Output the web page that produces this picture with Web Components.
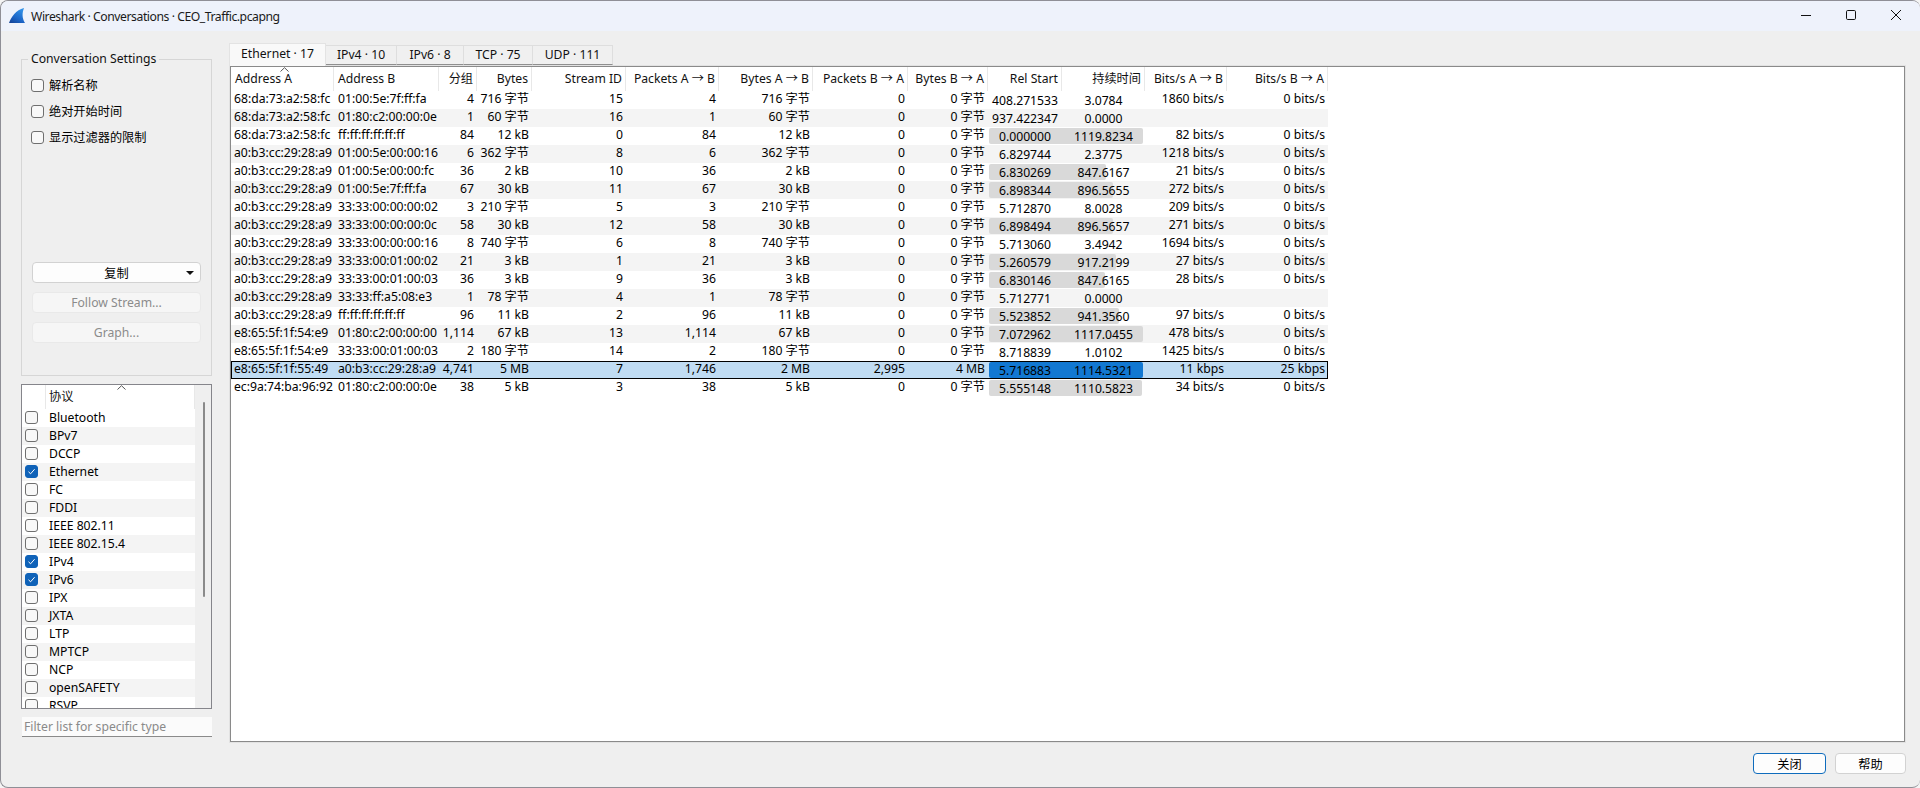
<!DOCTYPE html>
<html lang="zh">
<head>
<meta charset="utf-8">
<title>Wireshark · Conversations · CEO_Traffic.pcapng</title>
<style>
  html, body { margin: 0; height: 788px; overflow: hidden; background: #f4f4f4; }
  body { font: 12.2px "Noto Sans", "Noto Sans CJK SC", sans-serif; color: #000; }
</style>
</head>
<body>
<ws-window>
  <ws-titlebar slot="title">Wireshark · Conversations · CEO_Traffic.pcapng</ws-titlebar>
  <ws-sidebar slot="side"></ws-sidebar>
  <ws-tabs slot="main"></ws-tabs>
  <ws-btn slot="actions" kind="primary" style="width:73px">关闭</ws-btn>
  <ws-btn slot="actions" style="width:71px">帮助</ws-btn>
</ws-window>

<script>
class WsWindow extends HTMLElement {
  constructor() {
    super();
    this.attachShadow({ mode: "open" });
    this.shadowRoot.innerHTML = `
      <style>
        :host {
          display: flex;
          flex-direction: column;
          box-sizing: border-box;
          height: 788px;
          background: #efefef;
          border: 1px solid #8f8f96;
          border-right: 0;
          border-radius: 8px;
          overflow: hidden;
        }
        .body { flex: 1; display: flex; min-height: 0; padding-right: 14px; }
        .side { width: 191px; margin: 0 17px 0 20px; flex: none; }
        .main { flex: 1; min-width: 0; padding-top: 12px; display: flex; }
        .actions { display: flex; justify-content: flex-end; gap: 9px; padding: 10px 14px 13px 0; }
      </style>
      <slot name="title"></slot>
      <div class="body">
        <div class="side"><slot name="side"></slot></div>
        <div class="main"><slot name="main"></slot></div>
      </div>
      <div class="actions"><slot name="actions"></slot></div>
    `;
  }
}

class WsTitlebar extends HTMLElement {
  constructor() {
    super();
    this.attachShadow({ mode: "open" });
    this.shadowRoot.innerHTML = `
      <style>
        :host {
          display: flex;
          align-items: center;
          height: 30px;
          flex: none;
          background: #eef2fb;
          padding-left: 8px;
        }
        .fin { width: 16px; height: 16px; margin-right: 6px; flex: none; }
        .text { flex: 1; color: #1a1a1a; letter-spacing: -0.45px; }
        .ctl { display: flex; margin: 0 19px 2px 0; gap: 35px; }
        svg.c { width: 10px; height: 10px; fill: none; stroke: #111; stroke-width: 1; display: block; }
      </style>
      <svg class="fin" viewBox="0 0 16 16">
        <defs>
          <linearGradient id="g" x1="0" y1="1" x2="0.6" y2="0">
            <stop offset="0" stop-color="#123f92"/>
            <stop offset="0.45" stop-color="#1c66c8"/>
            <stop offset="1" stop-color="#2f8fe6"/>
          </linearGradient>
        </defs>
        <path d="M0 15 C2 9 7 2 15 0 C13 5 13 10 16 15 Z" fill="url(#g)"/>
      </svg>
      <span class="text"><slot></slot></span>
      <div class="ctl">
        <svg class="c" viewBox="0 0 10 10"><path d="M0 5.5H10"/></svg>
        <svg class="c" viewBox="0 0 10 10"><rect x=".5" y=".5" width="9" height="9" rx="1.2"/></svg>
        <svg class="c" viewBox="0 0 10 10"><path d="M0 0L10 10M10 0L0 10"/></svg>
      </div>
    `;
  }
}

class WsCheck extends HTMLElement {
  constructor() {
    super();
    this.attachShadow({ mode: "open" });
  }
  connectedCallback() {
    const on = this.hasAttribute("checked");
    this.shadowRoot.innerHTML = `
      <style>
        :host { display: flex; align-items: center; gap: 5px; }
        .box {
          width: 13px; height: 13px; flex: none; box-sizing: border-box;
          border-radius: 3px; display: block;
          border: 1px solid ${on ? "#0f62b8" : "#6f6f6f"};
          background: ${on ? "#0f62b8" : "#f8f8f8"};
        }
        svg { display: block; width: 11px; height: 11px; fill: none; stroke: #fff; stroke-width: 1; }
      </style>
      <span class="box">${on ? '<svg viewBox="0 0 11 11"><path d="M2.5 5.8L4.6 7.8L8.6 3.2"/></svg>' : ""}</span>
      <span><slot></slot></span>
    `;
  }
}

class WsBtn extends HTMLElement {
  constructor() {
    super();
    this.attachShadow({ mode: "open" });
  }
  connectedCallback() {
    const kind = this.getAttribute("kind");
    const look = {
      primary: "background:#fdfdfd;border-color:#0f6cbd;color:#000;",
      disabled: "background:#f6f6f6;border-color:#e9e9e9;color:#8b8b8b;",
    }[kind] || "background:#fdfdfd;border-color:#d2d2d2;color:#000;";
    this.shadowRoot.innerHTML = `
      <style>
        :host { display: block; height: 21px; }
        .b {
          position: relative; box-sizing: border-box; height: 100%;
          display: flex; align-items: center; justify-content: center;
          border: 1px solid; border-radius: 4px; ${look}
        }
        .arrow {
          position: absolute; right: 6px; top: 8px; width: 0; height: 0;
          border: 4px solid transparent; border-top: 4px solid #111; border-bottom: 0;
        }
      </style>
      <div class="b"><slot></slot>${kind === "menu" ? '<i class="arrow"></i>' : ""}</div>
    `;
  }
}

class WsSidebar extends HTMLElement {
  constructor() {
    super();
    this.attachShadow({ mode: "open" });
    this.shadowRoot.innerHTML = `
      <style>
        :host { display: flex; flex-direction: column; padding-top: 28px; }
        .group {
          box-sizing: border-box; height: 317px;
          border: 1px solid #d6d6d6; padding: 0 10px 32px 9px;
          display: flex; flex-direction: column;
        }
        .legend {
          align-self: flex-start; margin: -9px 0 9px -3px; padding: 0 3px;
          line-height: 16px; background: #efefef; color: #111;
        }
        .checks { display: flex; flex-direction: column; gap: 8px; }
        ws-check { height: 18px; }
        .btns { display: flex; flex-direction: column; gap: 9px; margin: auto 0 0 1px; }
        .filter {
          margin: 8px 0 0 1px; height: 20px; box-sizing: border-box; line-height: 19px;
          background: #fbfbfb; border-bottom: 1px solid #8a8a8a; padding-left: 2px; color: #8a8a8a;
        }
        ws-protocols { margin-top: 8px; }
      </style>
      <div class="group">
        <div class="legend">Conversation Settings</div>
        <div class="checks">
          <ws-check>解析名称</ws-check>
          <ws-check>绝对开始时间</ws-check>
          <ws-check>显示过滤器的限制</ws-check>
        </div>
        <div class="btns">
          <ws-btn kind="menu">复制</ws-btn>
          <ws-btn kind="disabled">Follow Stream...</ws-btn>
          <ws-btn kind="disabled">Graph...</ws-btn>
        </div>
      </div>
      <ws-protocols></ws-protocols>
      <div class="filter">Filter list for specific type</div>
    `;
  }
}

class WsProtocols extends HTMLElement {
  constructor() {
    super();
    this.attachShadow({ mode: "open" });
    const items = ["Bluetooth", "BPv7", "DCCP", "Ethernet", "FC", "FDDI", "IEEE 802.11", "IEEE 802.15.4",
      "IPv4", "IPv6", "IPX", "JXTA", "LTP", "MPTCP", "NCP", "openSAFETY", "RSVP"];
    const checked = ["Ethernet", "IPv4", "IPv6"];
    const rows = items.map((p) =>
      `<ws-check class="row" ${checked.includes(p) ? "checked" : ""}>${p}</ws-check>`).join("");
    this.shadowRoot.innerHTML = `
      <style>
        :host {
          display: block; position: relative; box-sizing: border-box; height: 325px;
          border: 1px solid #85858b; background: #efefef; overflow: hidden;
        }
        .list { width: 173px; }
        .head { display: flex; height: 24px; background: #fff; }
        .head b { width: 23px; border-right: 1px solid #e8e8e8; font-weight: 400; }
        .head span { flex: 1; border-right: 1px solid #e8e8e8; padding-left: 3px; line-height: 24px; color: #111; }
        .row { height: 18px; box-sizing: border-box; padding: 0 0 1px 3px; gap: 11px; background: #fff; }
        .row:nth-child(even) { background: #f4f4f4; }
        .caret { position: absolute; left: 95px; top: 0; width: 9px; height: 5px; fill: none; stroke: #555; }
        .thumb { position: absolute; left: 181px; top: 17px; width: 2px; height: 195px; background: #8a8a8a; border-radius: 1px; }
      </style>
      <div class="list">
        <div class="head"><b></b><span>协议</span></div>
        <div class="rows">${rows}</div>
      </div>
      <svg class="caret" viewBox="0 0 9 5"><path d="M.5 4.5L4.5 .7L8.5 4.5"/></svg>
      <div class="thumb"></div>
    `;
  }
}

class WsTabs extends HTMLElement {
  constructor() {
    super();
    this.attachShadow({ mode: "open" });
    const tabs = [["Ethernet · 17", 97], ["IPv4 · 10", 71], ["IPv6 · 8", 67], ["TCP · 75", 69], ["UDP · 111", 80]];
    this.shadowRoot.innerHTML = `
      <style>
        :host { display: flex; flex-direction: column; flex: 1; min-width: 0; }
        .bar { display: flex; align-items: flex-start; height: 22px; flex: none; }
        .tab {
          box-sizing: border-box; height: 20px; margin-top: 2px; text-align: center; line-height: 18px;
          background: #f0f0f0; border: 1px solid #dedede; border-left: 0; border-bottom-color: #8f8f8f; color: #111;
        }
        .tab.on { height: 23px; margin-top: 0; background: #f9f9f9; border: 1px solid #e3e3e3; border-bottom: 0; line-height: 20px; position: relative; z-index: 1; }
        .pane { flex: 1; min-height: 0; border: 1px solid #e2e2e2; display: flex; }
      </style>
      <div class="bar">${tabs.map(([t, w], i) => `<div class="tab ${i ? "" : "on"}" style="width:${w}px">${t}</div>`).join("")}</div>
      <div class="pane"><ws-table></ws-table></div>
    `;
  }
}

class WsTable extends HTMLElement {
  constructor() {
    super();
    this.attachShadow({ mode: "open" });
    const head = ["Address A", "Address B", "分组", "Bytes", "Stream ID", "Packets A → B", "Bytes A → B",
      "Packets B → A", "Bytes B → A", "Rel Start", "持续时间", "Bits/s A → B", "Bits/s B → A"];
    const A1 = "68:da:73:a2:58:fc", A2 = "a0:b3:cc:29:28:a9", A3 = "e8:65:5f:1f:54:e9";
    const Z = "0 字节";
    // last field is the width of the duration bar in px
    const rows = [
      [A1, "01:00:5e:7f:ff:fa", "4", "716 字节", "15", "4", "716 字节", "0", Z, "408.271533", "3.0784", "1860 bits/s", "0 bits/s", 0],
      [A1, "01:80:c2:00:00:0e", "1", "60 字节", "16", "1", "60 字节", "0", Z, "937.422347", "0.0000", "", "", 0],
      [A1, "ff:ff:ff:ff:ff:ff", "84", "12 kB", "0", "84", "12 kB", "0", Z, "0.000000", "1119.8234", "82 bits/s", "0 bits/s", 154],
      [A2, "01:00:5e:00:00:16", "6", "362 字节", "8", "6", "362 字节", "0", Z, "6.829744", "2.3775", "1218 bits/s", "0 bits/s", 0],
      [A2, "01:00:5e:00:00:fc", "36", "2 kB", "10", "36", "2 kB", "0", Z, "6.830269", "847.6167", "21 bits/s", "0 bits/s", 117],
      [A2, "01:00:5e:7f:ff:fa", "67", "30 kB", "11", "67", "30 kB", "0", Z, "6.898344", "896.5655", "272 bits/s", "0 bits/s", 124],
      [A2, "33:33:00:00:00:02", "3", "210 字节", "5", "3", "210 字节", "0", Z, "5.712870", "8.0028", "209 bits/s", "0 bits/s", 0],
      [A2, "33:33:00:00:00:0c", "58", "30 kB", "12", "58", "30 kB", "0", Z, "6.898494", "896.5657", "271 bits/s", "0 bits/s", 124],
      [A2, "33:33:00:00:00:16", "8", "740 字节", "6", "8", "740 字节", "0", Z, "5.713060", "3.4942", "1694 bits/s", "0 bits/s", 0],
      [A2, "33:33:00:01:00:02", "21", "3 kB", "1", "21", "3 kB", "0", Z, "5.260579", "917.2199", "27 bits/s", "0 bits/s", 127],
      [A2, "33:33:00:01:00:03", "36", "3 kB", "9", "36", "3 kB", "0", Z, "6.830146", "847.6165", "28 bits/s", "0 bits/s", 116],
      [A2, "33:33:ff:a5:08:e3", "1", "78 字节", "4", "1", "78 字节", "0", Z, "5.712771", "0.0000", "", "", 0],
      [A2, "ff:ff:ff:ff:ff:ff", "96", "11 kB", "2", "96", "11 kB", "0", Z, "5.523852", "941.3560", "97 bits/s", "0 bits/s", 130],
      [A3, "01:80:c2:00:00:00", "1,114", "67 kB", "13", "1,114", "67 kB", "0", Z, "7.072962", "1117.0455", "478 bits/s", "0 bits/s", 154],
      [A3, "33:33:00:01:00:03", "2", "180 字节", "14", "2", "180 字节", "0", Z, "8.718839", "1.0102", "1425 bits/s", "0 bits/s", 0],
      ["e8:65:5f:1f:55:49", "a0:b3:cc:29:28:a9", "4,741", "5 MB", "7", "1,746", "2 MB", "2,995", "4 MB", "5.716883", "1114.5321", "11 kbps", "25 kbps", 154],
      ["ec:9a:74:ba:96:92", "01:80:c2:00:00:0e", "38", "5 kB", "3", "38", "5 kB", "0", Z, "5.555148", "1110.5823", "34 bits/s", "0 bits/s", 153],
    ];
    const cell = (v, i) => `<div class="c c${i}" style="grid-column:${i + 1}">${v}</div>`;
    const rowHtml = rows.map((r, n) => {
      const w = r[13];
      const bar = w ? `<i class="bar" style="width:${w}px"></i>` : "";
      return `<div class="row ${n === 15 ? "sel" : ""}">${bar}${r.slice(0, 13).map(cell).join("")}</div>`;
    }).join("");
    this.shadowRoot.innerHTML = `
      <style>
        :host {
          display: block; flex: 1; min-width: 0; position: relative;
          border: 1px solid #8a8a8a; background: #fff; overflow: hidden;
          --cols: 103px 105px 38px 55px 94px 93px 94px 95px 80px 74px 83px 82px 101px;
        }
        .head, .row { display: grid; grid-template-columns: var(--cols); width: 1097px; }
        .head { height: 24px; line-height: 24px; color: #111; }
        .head div { border-right: 1px solid #e8e8e8; text-align: right; padding-right: 3px; white-space: nowrap; }
        .head div:nth-child(-n+2) { text-align: left; padding-left: 4px; }
        .row { height: 18px; line-height: 16px; }
        .row:nth-child(even) { background: #f4f4f4; }
        .row.sel { background: #c0dcf3; box-shadow: inset 0 0 0 1px #000; }
        .c { grid-row: 1; text-align: right; padding-right: 3px; white-space: nowrap; min-width: 0; }
        .c0 { text-align: left; padding-left: 3px; }
        .c1 { text-align: left; padding-left: 4px; }
        .c9, .c10 { text-align: center; padding: 1px 0 0; line-height: 18px; }
        .bar { grid-row: 1; grid-column: 10 / 12; height: 16px; margin: 1px 0 0 1px; background: #d9d9d9; border-radius: 2px; }
        .sel .bar { background: #1278d2; }
        .caret { position: absolute; left: 49px; top: 0; width: 9px; height: 5px; fill: none; stroke: #555; }
      </style>
      <div class="head">${head.map((h) => `<div>${h}</div>`).join("")}</div>
      <div class="rows">${rowHtml}</div>
      <svg class="caret" viewBox="0 0 9 5"><path d="M.5 4.5L4.5 .7L8.5 4.5"/></svg>
    `;
  }
}

customElements.define("ws-window", WsWindow);
customElements.define("ws-titlebar", WsTitlebar);
customElements.define("ws-check", WsCheck);
customElements.define("ws-btn", WsBtn);
customElements.define("ws-sidebar", WsSidebar);
customElements.define("ws-protocols", WsProtocols);
customElements.define("ws-tabs", WsTabs);
customElements.define("ws-table", WsTable);
</script>
</body>
</html>
